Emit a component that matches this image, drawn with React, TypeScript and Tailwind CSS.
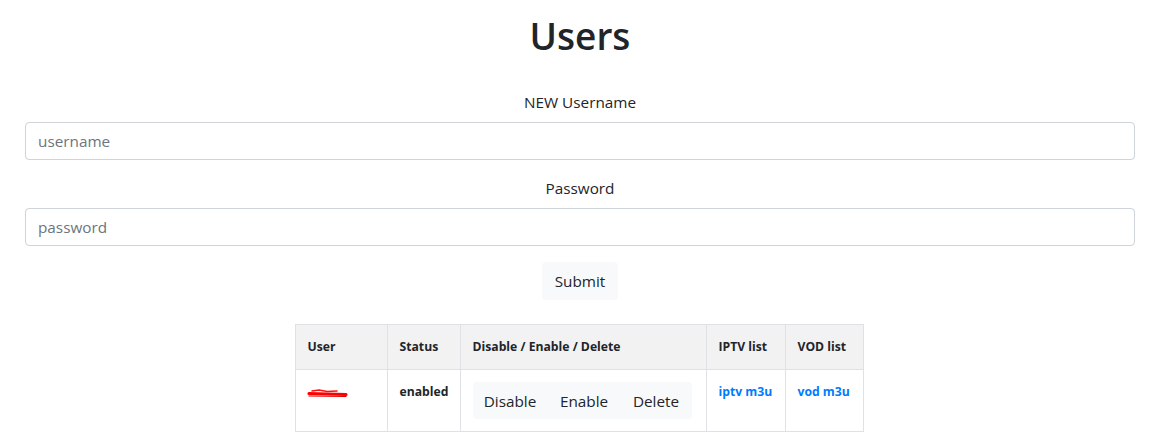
import React from "react";

const font = { fontFamily: '"Open Sans", "Noto Sans", sans-serif' };

function Scribble() {
  return (
    <svg width="42" height="12" viewBox="0 0 42 12" className="block">
      <path d="M2 7.5 L39 8.5" stroke="#ff0000" strokeWidth="3.2" fill="none" strokeLinecap="round" />
      <path d="M5 5 L12 4 L20 5.5 L30 5" stroke="#ff1010" strokeWidth="1.6" fill="none" strokeLinecap="round" />
      <path d="M2 10 L39 10.5" stroke="#e00000" strokeWidth="1.2" fill="none" strokeLinecap="round" />
    </svg>
  );
}

const th = "border border-[#dee2e6] p-[12px] text-left font-bold whitespace-nowrap";
const td = "border border-[#dee2e6] p-[12px] align-top whitespace-nowrap";

export default function App() {
  return (
    <div className="bg-white w-[1176px] h-[433px] overflow-hidden text-[#212529]" style={font}>
      <div className="w-[1110px] ml-[25px]">
        <h1 className="text-[37px] leading-[48px] font-semibold text-center mt-[12px] mb-[30px]">Users</h1>
        <div className="flex flex-col">
          <label className="text-center text-[15.3px] leading-[24px] mb-[8px]">NEW Username</label>
          <input
            placeholder="username"
            className="h-[38px] border border-[#ced4da] rounded-[4px] px-[12px] text-[15.3px] placeholder:text-[#6c757d] outline-none mb-[16px]"
          />
          <label className="text-center text-[15.3px] leading-[24px] mb-[8px]">Password</label>
          <input
            placeholder="password"
            className="h-[38px] border border-[#ced4da] rounded-[4px] px-[12px] text-[15.3px] placeholder:text-[#6c757d] outline-none mb-[16px]"
          />
          <div className="flex justify-center">
            <button className="h-[38px] w-[76px] bg-[#f8f9fa] rounded-[4px] text-[15.3px] text-[#212529]">Submit</button>
          </div>
        </div>
        <div className="flex justify-center mt-[24px] pr-[2px]">
          <table className="border-collapse table-fixed w-[568px] text-[12.2px] leading-[20px]">
            <colgroup>
              <col className="w-[92px]" />
              <col className="w-[73px]" />
              <col className="w-[246px]" />
              <col className="w-[79px]" />
              <col className="w-[78px]" />
            </colgroup>
            <thead>
              <tr className="bg-[#f2f2f2]">
                <th className={th}>User</th>
                <th className={th}>Status</th>
                <th className={th}>Disable / Enable / Delete</th>
                <th className={th}>IPTV list</th>
                <th className={th}>VOD list</th>
              </tr>
            </thead>
            <tbody>
              <tr>
                <td className={td}>
                  <div className="pt-[4px] -ml-[1px]"><Scribble /></div>
                </td>
                <td className={td + " font-bold"}>enabled</td>
                <td className={td}>
                  <div className="inline-flex bg-[#f8f9fa] rounded-[4px]">
                    <button className="h-[37px] w-[75px] text-[15.3px] text-[#212529]">Disable</button>
                    <button className="h-[37px] w-[73px] text-[15.3px] text-[#212529]">Enable</button>
                    <button className="h-[37px] w-[71px] text-[15.3px] text-[#212529]">Delete</button>
                  </div>
                </td>
                <td className={td}>
                  <a className="text-[#007bff] font-bold">iptv m3u</a>
                </td>
                <td className={td}>
                  <a className="text-[#007bff] font-bold">vod m3u</a>
                </td>
              </tr>
            </tbody>
          </table>
        </div>
      </div>
    </div>
  );
}
